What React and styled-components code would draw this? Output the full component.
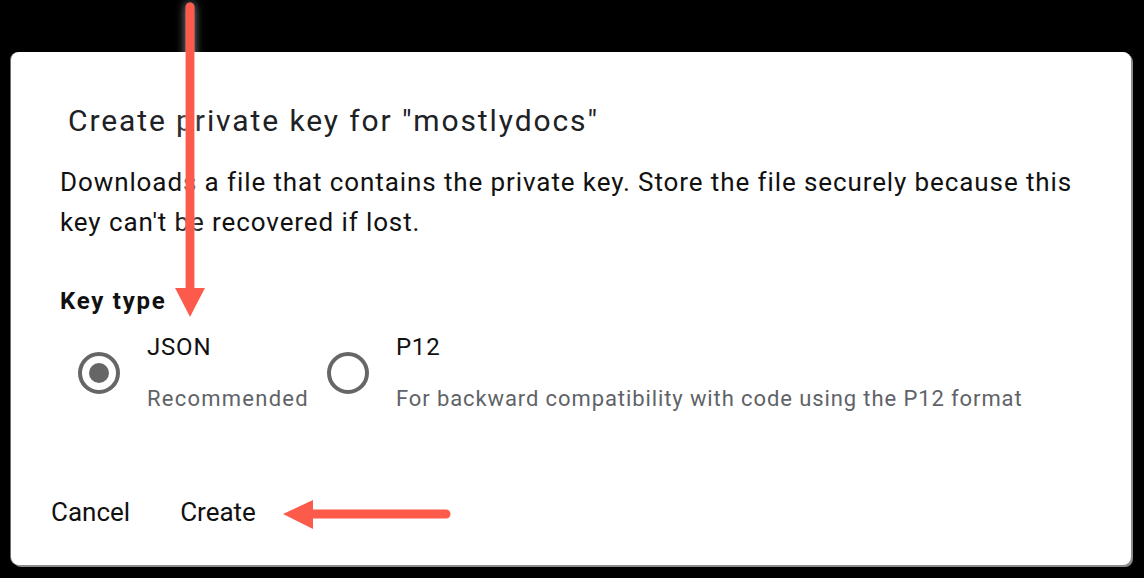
import React from 'react';
import styled, { createGlobalStyle } from 'styled-components';

const GlobalStyle = createGlobalStyle`
  html, body {
    margin: 0;
    padding: 0;
    background: #000;
  }
  body {
    font-family: Roboto, "Noto Sans", Arial, sans-serif;
    -webkit-font-smoothing: antialiased;
  }
`;

const Page = styled.div`
  width: 1144px;
  height: 578px;
  box-sizing: border-box;
  padding: 52px 0 0 11px;
  position: relative;
  overflow: hidden;
`;

const Dialog = styled.div`
  width: 1120px;
  height: 513px;
  box-sizing: border-box;
  background: #fff;
  border-radius: 8px;
  box-shadow: -1px 0 0 #6f6f6f, 2px 2px 0 #8c8c8c;
  padding: 50px 30px 0 49px;
  display: flex;
  flex-direction: column;
`;

const Title = styled.h2`
  margin: 0 0 0 8px;
  font-size: 30px;
  line-height: 38px;
  font-weight: 400;
  color: #202124;
  letter-spacing: 1.9px;
  white-space: nowrap;
`;

const Description = styled.p`
  margin: 22px 0 0;
  font-size: 26px;
  line-height: 40px;
  color: #111;
  letter-spacing: 0.9px;
  width: 1030px;
`;

const FieldLabel = styled.div`
  margin-top: 43px;
  font-size: 24px;
  line-height: 32px;
  font-weight: 700;
  color: #111;
  letter-spacing: 1.75px;
`;

const RadioGroup = styled.div`
  margin-top: 14px;
  display: flex;
  align-items: center;
`;

const Option = styled.label`
  display: flex;
  align-items: center;
  margin-left: ${(p) => p.$offset}px;
`;

const Radio = styled.span`
  width: 42px;
  height: 42px;
  box-sizing: border-box;
  border-radius: 50%;
  border: 4px solid #666;
  display: flex;
  align-items: center;
  justify-content: center;
  flex-shrink: 0;
  &::after {
    content: '';
    width: 20px;
    height: 20px;
    border-radius: 50%;
    background: #666;
    display: ${(p) => (p.$checked ? 'block' : 'none')};
  }
`;

const OptionText = styled.div`
  margin-left: 27px;
  display: flex;
  flex-direction: column;
`;

const OptionName = styled.span`
  font-size: 24px;
  line-height: 32px;
  color: #111;
  letter-spacing: 0.8px;
`;

const OptionHint = styled.span`
  margin-top: 20px;
  font-size: 22px;
  line-height: 32px;
  color: #5f6368;
  letter-spacing: ${(p) => p.$tracking}px;
  white-space: nowrap;
`;

const Actions = styled.div`
  margin-top: 71px;
  margin-left: -19px;
  display: flex;
  gap: 30px;
`;

const Button = styled.button`
  background: none;
  border: none;
  padding: 8px 10px;
  font-family: inherit;
  font-size: 26px;
  line-height: 36px;
  color: #111;
  cursor: pointer;
`;

const Overlay = styled.svg`
  position: absolute;
  left: 0;
  top: 0;
  pointer-events: none;
`;

const ARROW = '#fc5a4b';

function Arrows() {
  return (
    <Overlay width="1144" height="578" viewBox="0 0 1144 578">
      <defs>
        <filter id="glow" x="-200%" y="-20%" width="500%" height="140%">
          <feGaussianBlur in="SourceAlpha" stdDeviation="5" result="b" />
          <feFlood floodColor="#fff" floodOpacity="0.55" />
          <feComposite in2="b" operator="in" result="g" />
          <feMerge>
            <feMergeNode in="g" />
            <feMergeNode in="SourceGraphic" />
          </feMerge>
        </filter>
      </defs>
      <g filter="url(#glow)">
        <line x1="190" y1="7" x2="190" y2="292" stroke={ARROW} strokeWidth="9" strokeLinecap="round" />
        <polygon points="175,288 205,288 190,317" fill={ARROW} />
      </g>
      <line x1="310" y1="514" x2="446" y2="514" stroke={ARROW} strokeWidth="9" strokeLinecap="round" />
      <polygon points="283,514 313,500 313,529" fill={ARROW} />
    </Overlay>
  );
}

export default function App() {
  return (
    <Page>
      <GlobalStyle />
      <Dialog>
        <Title>Create private key for "mostlydocs"</Title>
        <Description>
          Downloads a file that contains the private key. Store the file securely because this
          key can't be recovered if lost.
        </Description>
        <FieldLabel>Key type</FieldLabel>
        <RadioGroup>
          <Option $offset={18}>
            <Radio $checked />
            <OptionText>
              <OptionName>JSON</OptionName>
              <OptionHint $tracking={1.25}>Recommended</OptionHint>
            </OptionText>
          </Option>
          <Option $offset={18}>
            <Radio />
            <OptionText>
              <OptionName>P12</OptionName>
              <OptionHint $tracking={0.9}>For backward compatibility with code using the P12 format</OptionHint>
            </OptionText>
          </Option>
        </RadioGroup>
        <Actions>
          <Button>Cancel</Button>
          <Button>Create</Button>
        </Actions>
      </Dialog>
      <Arrows />
    </Page>
  );
}
